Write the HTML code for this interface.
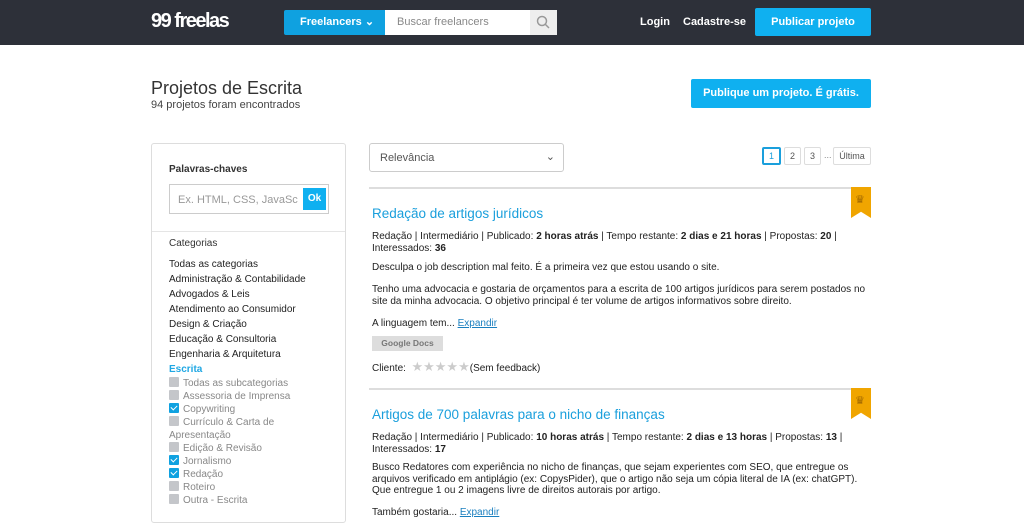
<!DOCTYPE html>
<html><head><meta charset="utf-8"><style>
*{margin:0;padding:0;box-sizing:border-box}
body{width:1024px;height:509px;overflow:hidden;background:#fff;font-family:"Liberation Sans",sans-serif;color:#222;position:relative}
.hdr{position:absolute;left:0;top:0;width:1024px;height:45px;background:#2d3039}
.abs{position:absolute}
.logo{left:151px;top:10px;color:#fff;font-weight:bold;font-size:20px;letter-spacing:-1.5px}
.fl{left:284px;top:10px;width:101px;height:25px;background:#0fa1e0;color:#fff;font-size:11px;font-weight:bold;line-height:25px;padding-left:16px;border-radius:2px 0 0 2px}
.srch{left:385px;top:10px;width:145px;height:25px;background:#fff;color:#888;font-size:11px;line-height:25px;padding-left:12px}
.sbtn{left:530px;top:10px;width:27px;height:25px;background:#eee}
.nav{top:16px;color:#fff;font-size:11px;font-weight:bold}
.pub{left:755px;top:8px;width:116px;height:28px;background:#0fb0f0;color:#fff;font-size:11px;font-weight:bold;text-align:center;line-height:28px;border-radius:2px}
h1{position:absolute;left:151px;top:78px;font-size:18px;font-weight:normal;color:#333}
.cnt{left:151px;top:99px;font-size:11px;color:#444}
.pub2{left:691px;top:79px;width:180px;height:29px;background:#0fb0f0;color:#fff;font-size:11px;font-weight:bold;text-align:center;line-height:29px;border-radius:2px}
.side{left:151px;top:143px;width:195px;height:380px;border:1px solid #ddd;border-radius:3px}
.side .t{position:absolute;left:17px;font-size:10px;font-weight:bold;color:#333}
.kw{position:absolute;left:17px;top:40px;width:160px;height:30px;border:1px solid #ccc;font-size:11px;color:#999;padding:9px 8px}
.ok{position:absolute;right:2px;top:3px;width:23px;height:22px;background:#0fb0f0;color:#fff;font-size:10px;text-align:center;line-height:22px;font-weight:bold}
.cats{position:absolute;left:17px;top:113px;font-size:10px;line-height:15px;color:#222}
.sub{color:#888;line-height:13px}
.cb{display:inline-block;width:10px;height:10px;background:#c4c6ca;margin-right:4px;vertical-align:-1px;border-radius:1px}
.ck{background:#0fa1e0;position:relative}
.ck:after{content:"";position:absolute;left:3px;top:1px;width:3px;height:5px;border:solid #fff;border-width:0 1px 1px 0;transform:rotate(45deg)}
.sel{left:369px;top:143px;width:195px;height:29px;border:1px solid #ccc;border-radius:3px;font-size:11px;color:#555;padding:8px 10px}
.pg{top:147px;height:18px;border:1px solid #ddd;font-size:9px;color:#555;text-align:center;line-height:16px;border-radius:2px}
.card{left:369px;width:502px;border-top:2px solid #ddd}
.rib{position:absolute;right:0;top:-2px;width:20px;height:31px;background:#f0a500;clip-path:polygon(0 0,100% 0,100% 100%,50% 80%,0 100%)}
.rib:after{content:"♛";position:absolute;left:4px;top:6px;color:#a06800;font-size:11px}
.ti{position:absolute;left:3px;top:17px;color:#1a9fdc;font-size:13.5px}
.meta{position:absolute;left:3px;font-size:10px;line-height:11.5px;width:495px}
.tag{position:absolute;left:3px;width:71px;height:15px;background:#ddd;color:#777;font-size:8.5px;font-weight:bold;text-align:center;line-height:15px}
.stars{color:#ccc;font-size:13px;letter-spacing:0}
</style></head><body>
<div class="hdr"></div>
<div class="abs logo">99 freelas</div>
<div class="abs fl">Freelancers ⌄</div>
<div class="abs srch">Buscar freelancers</div>
<div class="abs sbtn"><svg width="27" height="25"><circle cx="12" cy="11" r="4.5" fill="none" stroke="#999" stroke-width="1.5"/><line x1="15" y1="14" x2="19" y2="18" stroke="#999" stroke-width="1.5"/></svg></div>
<div class="abs nav" style="left:640px">Login</div>
<div class="abs nav" style="left:683px">Cadastre-se</div>
<div class="abs pub">Publicar projeto</div>
<h1>Projetos de Escrita</h1>
<div class="abs cnt">94 projetos foram encontrados</div>
<div class="abs pub2">Publique um projeto. É grátis.</div>
<div class="abs side">
<div class="t" style="top:20px">Palavras-chaves</div>
<div class="kw">Ex. HTML, CSS, JavaSc<div class="ok">Ok</div></div>
<div style="position:absolute;left:0;top:87px;width:193px;border-top:1px solid #e5e5e5"></div>
<div class="t" style="top:94px;font-weight:normal;color:#333">Categorias</div>
<div class="cats">Todas as categorias<br>Administração &amp; Contabilidade<br>Advogados &amp; Leis<br>Atendimento ao Consumidor<br>Design &amp; Criação<br>Educação &amp; Consultoria<br>Engenharia &amp; Arquitetura<br><b style="color:#1fa7e3">Escrita</b>
<div class="sub"><span class="cb"></span>Todas as subcategorias<br><span class="cb"></span>Assessoria de Imprensa<br><span class="cb ck"></span>Copywriting<br><span class="cb"></span>Currículo &amp; Carta de<br>Apresentação<br><span class="cb"></span>Edição &amp; Revisão<br><span class="cb ck"></span>Jornalismo<br><span class="cb ck"></span>Redação<br><span class="cb"></span>Roteiro<br><span class="cb"></span>Outra - Escrita</div></div>
</div>
<div class="abs sel">Relevância<span style="position:absolute;right:8px;top:6px">⌄</span></div>
<div class="abs pg" style="left:762px;width:19px;border:2px solid #1a9fdc;color:#1a9fdc;line-height:14px">1</div>
<div class="abs pg" style="left:784px;width:17px">2</div>
<div class="abs pg" style="left:804px;width:17px">3</div>
<div class="abs" style="left:824px;top:150px;font-size:9px;color:#888">...</div>
<div class="abs pg" style="left:833px;width:38px">Última</div>

<div class="abs card" style="top:187px;height:200px">
<div class="rib"></div>
<div class="ti">Redação de artigos jurídicos</div>
<div class="meta" style="top:42px">Redação | Intermediário | Publicado: <b>2 horas atrás</b> | Tempo restante: <b>2 dias e 21 horas</b> | Propostas: <b>20</b> |<br>Interessados: <b>36</b></div>
<div class="meta" style="top:73px">Desculpa o job description mal feito. É a primeira vez que estou usando o site.</div>
<div class="meta" style="top:95px">Tenho uma advocacia e gostaria de orçamentos para a escrita de 100 artigos jurídicos para serem postados no site da minha advocacia. O objetivo principal é ter volume de artigos informativos sobre direito.</div>
<div class="meta" style="top:129px">A linguagem tem... <u style="color:#1a7fbf">Expandir</u></div>
<div class="tag" style="top:147px">Google Docs</div>
<div class="meta" style="top:172px">Cliente: &nbsp;<span class="stars">★★★★★</span>(Sem feedback)</div>
</div>
<div class="abs card" style="top:388px;height:130px">
<div class="rib"></div>
<div class="ti">Artigos de 700 palavras para o nicho de finanças</div>
<div class="meta" style="top:42px">Redação | Intermediário | Publicado: <b>10 horas atrás</b> | Tempo restante: <b>2 dias e 13 horas</b> | Propostas: <b>13</b> |<br>Interessados: <b>17</b></div>
<div class="meta" style="top:72px">Busco Redatores com experiência no nicho de finanças, que sejam experientes com SEO, que entregue os arquivos verificado em antiplágio (ex: CopysPider), que o artigo não seja um cópia literal de IA (ex: chatGPT). Que entregue 1 ou 2 imagens livre de direitos autorais por artigo.</div>
<div class="meta" style="top:117px">Também gostaria... <u style="color:#1a7fbf">Expandir</u></div>
</div>
</body></html>
